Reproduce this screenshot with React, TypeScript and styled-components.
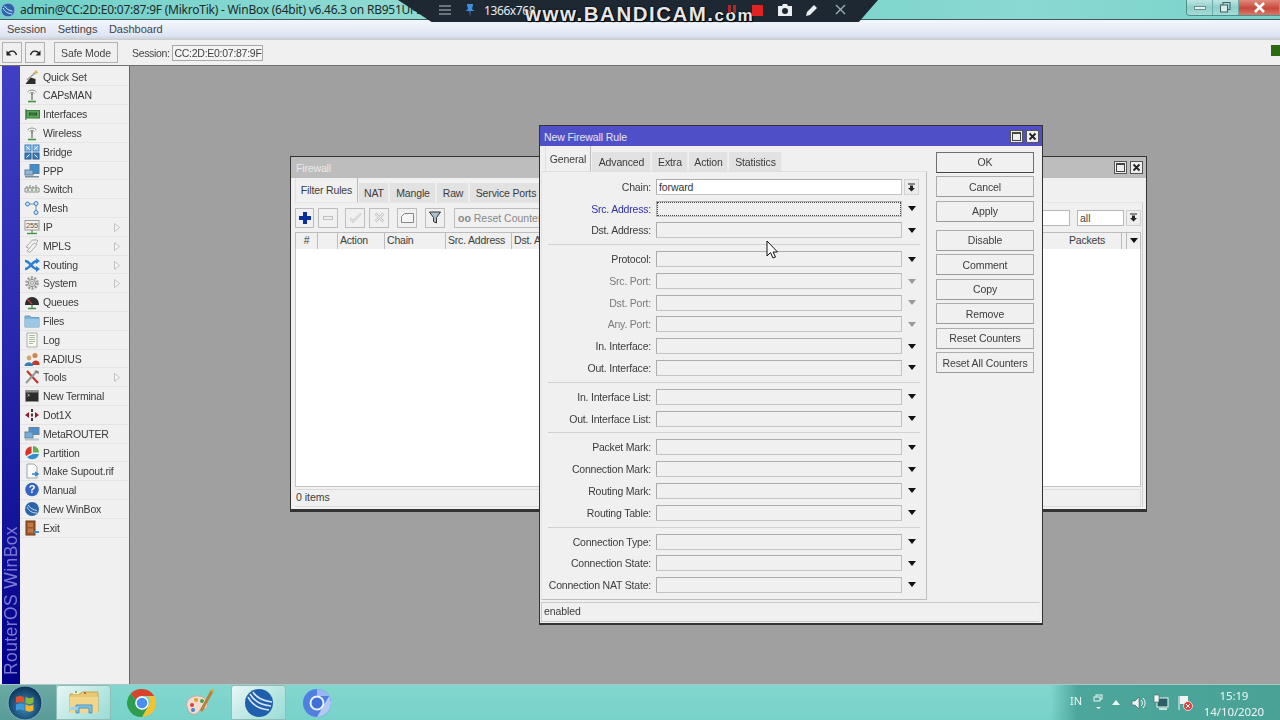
import React from "react";
import styled, { createGlobalStyle } from "styled-components";

const Global = createGlobalStyle`
  html, body { margin: 0; padding: 0; overflow: hidden; background: #a0a0a0; }
  * { box-sizing: border-box; }
  #root { font-family: "Liberation Sans", Arial, sans-serif; font-size: 11px; color: #333; }
`;

const Page = styled.div`
  width: 1280px; height: 720px; position: relative; overflow: hidden;
  display: flex; flex-direction: column; filter: blur(0.3px);
`;

/* ---------- window chrome ---------- */
const TitleBar = styled.div`
  height: 20px; flex: none; display: flex; align-items: center; padding-left: 0;
  background: linear-gradient(100deg, #6fd0c8 0%, #8edad3 30%, #79d3cb 60%, #8ad9d2 80%, #78d2ca 100%);
  border-bottom: 1px solid #3f5a58;
`;
const AppTitle = styled.span`
  font-family: "Noto Sans", sans-serif; font-size: 12px; color: #1c2a2a; margin-left: 4px; white-space: nowrap;
  letter-spacing: -0.02em;
`;
const WinControls = styled.div`
  margin-left: auto; align-self: flex-start; display: flex; height: 16px;
  border: 1px solid #4e8f8b; border-top: 0; border-right: 0; border-radius: 0 0 0 4px; overflow: hidden;
`;
const WinCtl = styled.div<{ $w: number; $close?: boolean }>`
  width: ${p => p.$w}px; display: flex; align-items: center; justify-content: center;
  background: ${p => p.$close ? "linear-gradient(#e08a7c, #c8483a 55%, #d67a6a)" : "linear-gradient(#bfe6e3, #8ecfca 50%, #a6dcd8)"};
  border-right: 1px solid #6aa9a5;
`;
const MenuBar = styled.div`
  height: 20px; flex: none; display: flex; align-items: center; padding-left: 7px; gap: 11.5px;
  background: linear-gradient(#f3f6fc, #dfe6f4 75%, #d3d7e2 90%, #c9c9c9);
  font-size: 11px; color: #444; padding-bottom: 3px;
`;
const ToolBar = styled.div`
  height: 26px; flex: none; display: flex; align-items: center; background: #f0f0f0;
  border-bottom: 1px solid #6f6f6f; padding-left: 2px;
`;
const ToolBtn = styled.div<{ $w: number; $ml?: number }>`
  width: ${p => p.$w}px; height: 21px; margin-left: ${p => p.$ml ?? 0}px; display: flex; align-items: center; justify-content: center;
  border: 1px solid #b0b0b0; background: #f0f0f0; font-size: 10.5px; letter-spacing: -.1px; color: #444;
`;
const SessionLabel = styled.span` margin-left: 14px; font-size: 10.5px; letter-spacing: -.35px; color: #444; `;
const SessionField = styled.div`
  margin-left: 3px; width: 91px; height: 16px; background: #f4f4f4; border: 1px solid #a8a8a8;
  font-size: 10.5px; letter-spacing: -.27px; line-height: 14px; padding-left: 1px; color: #444; white-space: nowrap;
`;
const StatusLed = styled.div` margin-left: auto; width: 9px; height: 11px; background: #2c6b12; margin-top: -5px; `;

/* ---------- bandicam ---------- */
const Bandicam = styled.div`
  position: absolute; left: 398px; top: 0; width: 480px; height: 22px; background: #1d2833;
  clip-path: polygon(0 0, 100% 0, 96% 100%, 7% 100%);
`;
const BandRow = styled.div`
  position: absolute; left: 398px; top: 0; width: 480px; height: 22px; display: flex; align-items: center;
  color: #e8eef2; padding-left: 41px;
`;
const BandRes = styled.span` font-size: 12px; margin-left: 9px; font-family: "Noto Sans", sans-serif; letter-spacing: -0.4px; margin-top:-2px; `;
const BandMark = styled.span`
  position: absolute; left: 127px; top: 3px; font-size: 20.5px; font-weight: 700; letter-spacing: 1.5px;
  color: rgba(255,255,255,.92); text-shadow: 0 0 2px #000, 1px 1px 1px #000; white-space: nowrap; line-height: 22px;
`;
const BandMarkSmall = styled.span` font-size: 17px; `;
const BandIcon = styled.svg<{ $x: number }>` position: absolute; left: ${p => p.$x}px; top: 2px; width: 16px; height: 16px; `;

/* ---------- main ---------- */
const Main = styled.div` flex: 1; display: flex; min-height: 0; position: relative; `;
const Sidebar = styled.aside`
  width: 130px; flex: none; display: flex; background: #f0f0f0; border-right: 1px solid #666; padding-left: 2px;
`;
const Strip = styled.div`
  width: 18px; flex: none; display: flex; justify-content: flex-start; align-items: flex-end; padding-bottom: 9px;
  background: linear-gradient(#3f40c6, #2626ae 45%, #00008a 100%);
`;
const StripText = styled.span`
  writing-mode: vertical-rl; transform: rotate(180deg); font-size: 17.5px; line-height: 18px; color: #7a7ad0;
  white-space: nowrap; letter-spacing: .4px;
`;
const MenuList = styled.nav` flex: 1; padding-top: 1.7px; `;
const MenuItem = styled.div`
  height: 18.81px; display: flex; align-items: center; position: relative; padding-left: 4px;
  border-bottom: 1px solid #e4e4e4; font-size: 10.5px; letter-spacing: -.2px; color: #3a3a3a; white-space: nowrap;
`;
const MenuIconSvg = styled.svg` width: 16px; height: 16px; flex: none; margin-right: 3px; `;
const SubArrow = styled.svg` position: absolute; left: 94px; top: 5px; width: 6px; height: 9px; `;
const Workspace = styled.div` flex: 1; background: #a0a0a0; `;

/* ---------- inner windows ---------- */
const FirewallWin = styled.section`
  position: absolute; left: 290px; top: 90px; width: 857px; height: 356px; background: #f0f0f0;
  border: 1px solid #333; border-bottom: 3px solid #333; display: flex; flex-direction: column;
`;
const FwTitle = styled.div`
  height: 21px; flex: none; background: #bdbdbd; color: #e9e9e9; font-size: 10.5px; letter-spacing: -.15px; display: flex; align-items: center; padding-left: 5px;
`;
const WinBtns = styled.div` margin-left: auto; display: flex; gap: 3px; padding-right: 3px; margin-top: -1px; `;
const WinBtn = styled.div`
  width: 13px; height: 13px; background: #ededed; border: 1px solid #555; display: flex; align-items: center; justify-content: center;
`;
const MaxBox = styled.div` width: 9px; height: 9px; border: 1px solid #444; border-top-width: 2px; `;
const TabRow = styled.div<{ $pl: number; $h: number }>`
  display: flex; align-items: flex-end; gap: 1px; padding-left: ${p => p.$pl}px; height: ${p => p.$h}px; flex: none;
`;
const Tab = styled.div<{ $w: number; $active?: boolean }>`
  width: ${p => p.$w}px; height: ${p => p.$active ? "100%" : "19px"}; display: flex; align-items: center; justify-content: center;
  font-size: 10.5px; letter-spacing: -.15px; color: #3c3c3c; background: ${p => p.$active ? "#f0f0f0" : "#e2e2e2"};
  border-right: 1px solid ${p => p.$active ? "#bbb" : "#ececec"};
  border-left: 1px solid ${p => p.$active ? "#e0e0e0" : "transparent"};
  white-space: nowrap; overflow: hidden;
`;
const FwPanel = styled.div`
  flex: 1; margin: 0 3px 2px 3px; border-top: 1px solid #e6e6e6; border-right: 1px solid #cfcfcf; display: flex; flex-direction: column; padding: 0 1px 0 1px; min-height: 0;
`;
const FwToolbar = styled.div` height: 29px; flex: none; display: flex; align-items: center; `;
const SmallBtn = styled.div<{ $ml?: number; $w?: number }>`
  width: ${p => p.$w ?? 20}px; height: 20px; margin-left: ${p => p.$ml ?? 0}px; flex: none; display: flex; align-items: center; justify-content: center;
  border: 1px solid #bdbdbd; background: #f0f0f0;
`;
const ResetBtn = styled.div`
  width: 150px; height: 20px; margin-left: 9px; flex: none; display: flex; align-items: center; padding-left: 3px;
  border: 1px solid #bdbdbd; background: #f0f0f0; color: #888; font-size: 10.5px; white-space: nowrap; overflow: hidden;
`;
const FwRight = styled.div` margin-left: auto; display: flex; align-items: center; `;
const WhiteInput = styled.div<{ $w: number; $ml?: number }>`
  width: ${p => p.$w}px; height: 16px; margin-left: ${p => p.$ml ?? 0}px; background: #fff; border: 1px solid #b8b8b8; font-size: 10.5px; line-height: 14px; padding-left: 2px; color: #444;
`;
const DropBtn = styled.div<{ $ml?: number }>`
  width: 15px; height: 16px; margin-left: ${p => p.$ml ?? 0}px; flex: none; border: 1px solid #cfcfcf; background: #eee; display: flex; align-items: center; justify-content: center;
`;
const TableHead = styled.div` height: 17px; flex: none; display: flex; background: #f0f0f0; border: 1px solid #bdbdbd; border-bottom: 0; `;
const HeadCell = styled.div<{ $w: number; $center?: boolean; $pl?: number }>`
  width: ${p => p.$w}px; flex: none; font-size: 10.5px; letter-spacing: -.2px; color: #3c3c3c; padding-left: ${p => p.$center ? 0 : p.$pl ?? 2}px; text-align: ${p => p.$center ? "center" : "left"};
  border-right: 1px solid #bdbdbd; line-height: 15px; white-space: nowrap; overflow: hidden;
`;
const HeadFill = styled.div` flex: 1; `;
const HeadArrow = styled.div` width: 13px; flex: none; display: flex; justify-content: center; padding-top: 5px; `;
const TableBody = styled.div` flex: 1; background: #fff; border: 1px solid #c4c4c4; border-top: 0; `;
const FwStatus = styled.div`
  height: 18px; flex: none; margin-top: 2px; font-size: 10.5px; line-height: 14px; padding-left: 1px; color: #3c3c3c; border: 1px solid #dcdcdc; border-left: 0;
`;

const DialogWin = styled.section`
  position: absolute; left: 539px; top: 59px; width: 504px; height: 500px; background: #f0f0f0;
  border: 1px solid #333; border-bottom: 2px solid #333; display: flex; flex-direction: column;
`;
const DlgTitle = styled.div`
  height: 20px; flex: none; background: #4f50c8; color: #e6e6f6; font-size: 10.5px; letter-spacing: -.1px; display: flex; align-items: center; padding: 1px 0 0 4px;
`;
const DlgBody = styled.div` flex: 1; display: flex; min-height: 0; padding-left: 1px; `;
const DlgLeft = styled.div` width: 386px; flex: none; display: flex; flex-direction: column; `;
const FormPanel = styled.div`
  flex: 1; border-top: 1px solid #dedede; border-right: 1px solid #bdbdbd; border-bottom: 1px solid #bdbdbd; border-left: 1px solid #e4e4e4; padding-top: 4.2px;
`;
const Row = styled.div` height: 21.7px; display: flex; align-items: center; `;
const Label = styled.div<{ $tone: "normal" | "muted" | "focus" }>`
  width: 109px; flex: none; text-align: right; font-size: 10.5px; letter-spacing: -.2px; white-space: nowrap;
  color: ${p => p.$tone === "muted" ? "#7a7a7a" : p.$tone === "focus" ? "#2f2fb0" : "#3c3c3c"};
`;
const Field = styled.div<{ $white?: boolean; $focus?: boolean }>`
  width: 246px; height: 16px; margin-left: 5px; flex: none; position: relative;
  background: ${p => p.$white ? "#fff" : "#f0f0f0"}; border: 1px solid #adadad; border-bottom-color: #c4c4c4; border-right-color: #c4c4c4;
  font-size: 10.5px; letter-spacing: -.1px; line-height: 14px; padding-left: 2px; color: #333;
  outline: ${p => p.$focus ? "1px dotted #444" : "none"}; outline-offset: -2px;
`;
const ArrowWrap = styled.div` width: 20px; display: flex; justify-content: center; `;
const Arrow = styled.div<{ $muted?: boolean }>`
  width: 0; height: 0; border-left: 4.5px solid transparent; border-right: 4.5px solid transparent;
  border-top: 5px solid ${p => p.$muted ? "#9a9a9a" : "#111"};
`;
const Sep = styled.div`
  height: 7.3px; display: flex; align-items: center; padding: 0 6px 0 6px;
  &::before { content: ""; flex: 1; height: 1px; background: #d2d2d2; }
`;
const ChainBtn = styled.div` width: 15px; height: 16px; margin-left: 2px; border: 1px solid #d2d2d2; background: #ececec; display: flex; align-items: center; justify-content: center; `;
const DlgButtons = styled.div` flex: 1; display: flex; flex-direction: column; padding: 2px 0 0 9px; `;
const DlgBtn = styled.div<{ $def?: boolean; $mt?: number }>`
  width: 98px; height: 21px; flex: none; margin-top: ${p => p.$mt ?? 3.5}px; display: flex; align-items: center; justify-content: center;
  border: 1px solid ${p => p.$def ? "#707070" : "#adadad"}; border-bottom-color: ${p => p.$def ? "#444" : "#9a9a9a"};
  font-size: 10.5px; letter-spacing: -.1px; color: #3c3c3c; background: #f0f0f0;
`;
const DlgStatus = styled.div`
  height: 20px; flex: none; margin: 2px 2px 1px 1px; border: 1px solid #c9c9c9; border-right-color: #eee; font-size: 10.5px; letter-spacing: -.1px; line-height: 17px; padding-left: 2px; color: #3c3c3c;
`;
const Cursor = styled.svg` position: absolute; left: 766px; top: 174px; width: 12px; height: 20px; `;

/* ---------- taskbar ---------- */
const Taskbar = styled.footer`
  height: 36px; flex: none; display: flex; align-items: stretch;
  background: linear-gradient(#83d6ce, #78d2ca); border-top: 1px solid #a8c8c4;
`;
const StartArea = styled.div` width: 56px; flex: none; display: flex; align-items: center; padding-left: 7px; background: linear-gradient(#6aa9a4, #5a9c98); `;
const TaskBtn = styled.div<{ $on?: boolean; $ml?: number }>`
  width: ${p => p.$on ? 55 : 58}px; flex: none; margin-left: ${p => p.$ml ?? 0}px; display: flex; align-items: center; justify-content: center;
  background: ${p => p.$on ? "linear-gradient(135deg, #e8f6f5, #b6e6e1 60%, #9bdcd6)" : "transparent"};
  border: ${p => p.$on ? "1px solid #8fbdb9" : "0"}; border-radius: 3px 3px 0 0;
`;
const Tray = styled.div`
  margin-left: auto; width: 230px; display: flex; align-items: center; position: relative; color: #eef6f5;
  background: linear-gradient(90deg, rgba(70,160,150,0), #4da69b 12%, #4aa297 100%);
  font-family: "Noto Sans", sans-serif; font-size: 12px;
`;
const TrayLang = styled.span` margin-left: 20px; font-size: 11px; margin-top: -4px; width: 20px; `;
const TrayIcon = styled.svg<{ $ml: number }>` margin-left: ${p => p.$ml}px; flex: none; `;
const Clock = styled.div` margin-left: auto; margin-right: 16px; text-align: center; font-size: 11.5px; line-height: 16px; letter-spacing: -.1px; margin-top: 3px; `;

/* ---------- icons ---------- */
const Antenna = () => (<>
  <path d="M3.5 5a6 6 0 0 1 9 0M5.5 6.5a3.2 3.2 0 0 1 5 0" stroke="#8a9a8a" fill="none" />
  <path d="M8 7v6" stroke="#666" strokeWidth="1.2" />
  <circle cx="8" cy="7" r="1" fill="#777" />
  <path d="M4 14.5h8" stroke="#3c9a3c" strokeWidth="1.6" />
</>);
const Monitors = () => (<>
  <rect x="5" y="1.5" width="10" height="7" fill="#4a8fd0" stroke="#70808e" />
  <rect x="1" y="6" width="8" height="6" fill="#6fb0e0" stroke="#70808e" />
  <rect x="1" y="12.5" width="14" height="2" fill="#b8c4cc" />
</>);
const sidebarIcons: Record<string, React.ReactNode> = {
  "Quick Set": <>
    <path d="M1.5 15l5-6.500 5 1.500v5z" fill="#2d2d2d" />
    <path d="M3 11l8-7" stroke="#9a9a9a" strokeWidth="1.6" />
    <path d="M12 .5l.8 2 2 .8-2 .8-.8 2-.8-2-2-.8 2-.8z" fill="#d9b43a" />
  </>,
  "CAPsMAN": <Antenna />,
  "Interfaces": <>
    <rect x="1" y="3" width="1.5" height="11" fill="#8a8a8a" />
    <rect x="2.5" y="4.5" width="13" height="7.5" fill="#5aa85a" stroke="#3c7c3c" />
    <path d="M5 6.500h8v3H5z" fill="#1f4f1f" />
    <path d="M7 6.500v3M9 6.500v3M11 6.500v3" stroke="#7bc47b" strokeWidth=".6" />
  </>,
  "Wireless": <Antenna />,
  "Bridge": <>
    <rect x="1" y="1" width="6" height="6" fill="#8fc3ea" stroke="#3a7ec0" />
    <rect x="9" y="1" width="6" height="6" fill="#8fc3ea" stroke="#3a7ec0" />
    <rect x="1" y="9" width="6" height="6" fill="#3a7ec0" stroke="#24598f" />
    <rect x="9" y="9" width="6" height="6" fill="#3a7ec0" stroke="#24598f" />
    <path d="M2.500 2.500l3 3M13.500 2.500l-3 3M5.500 10.500l-3 3M10.500 10.500l3 3" stroke="#fff" />
  </>,
  "PPP": <>
    <rect x="6" y="1.5" width="9" height="9" fill="#3f8ed0" stroke="#5b7d99" />
    <rect x="1" y="7" width="8" height="5" fill="#8fb8d8" stroke="#5b7d99" />
    <path d="M1 13h14v1.500H1z" fill="#7a8ea0" />
  </>,
  "Switch": <>
    <path d="M1 7h14v4H1z" fill="#e8e8e8" stroke="#8a8a8a" />
    <path d="M3 5v2M6 4v3M9 5v2M12 4v3" stroke="#7a7a7a" />
    <path d="M3 9h2M7 9h2M11 9h2" stroke="#3c8c3c" />
  </>,
  "Mesh": <>
    <circle cx="3.5" cy="4" r="2" fill="#cfe4f5" stroke="#3a7ec0" />
    <circle cx="12" cy="3.5" r="2" fill="#cfe4f5" stroke="#3a7ec0" />
    <circle cx="12" cy="12.5" r="2" fill="#cfe4f5" stroke="#3a7ec0" />
    <path d="M5.500 4H10M12 5.500v5" stroke="#6a8aa5" />
  </>,
  "IP": <>
    <rect x="1" y="1.5" width="14" height="9.5" fill="#f0f0f0" stroke="#999" />
    <text x="8" y="9" fontSize="7.5" textAnchor="middle" fill="#555" fontFamily="Liberation Sans">255</text>
    <path d="M8 11v3" stroke="#666" /><path d="M3 14.500h10" stroke="#3c9a3c" strokeWidth="1.4" />
  </>,
  "MPLS": <>
    <path d="M2 9l6.500-7H13l1 1-7 8z" fill="#f2f2f2" stroke="#aaa" />
    <path d="M3 13l7-8 3 1.500-7 8z" fill="#f6f6f6" stroke="#aaa" />
  </>,
  "Routing": <>
    <path d="M1 4c5 0 7 8 12 8M1 12c5 0 7-8 12-8" stroke="#2f7fd0" strokeWidth="2.6" fill="none" />
    <path d="M12 1l4 3-4 3zM12 9l4 3-4 3z" fill="#2f7fd0" />
  </>,
  "System": <>
    <circle cx="8" cy="8" r="5.5" stroke="#999" strokeWidth="2.6" strokeDasharray="2 1.45" fill="none" />
    <circle cx="8" cy="8" r="3.6" fill="#e4e4e4" stroke="#888" />
    <circle cx="8" cy="8" r="1.5" fill="#f4f4f4" stroke="#999" />
  </>,
  "Queues": <>
    <path d="M1 10a7 7 0 0 1 14 0v1H1z" fill="#2e2e2e" />
    <path d="M3 5l5 5" stroke="#d03a3a" strokeWidth="1.2" />
    <path d="M8 11v3" stroke="#555" /><path d="M4 14.500h8" stroke="#3c9a3c" strokeWidth="1.5" />
  </>,
  "Files": <>
    <path d="M1 3h5l1 1.500h8V14H1z" fill="#7fb2d6" stroke="#6a9cc0" />
    <path d="M1 6h14v8H1z" fill="#9cc6e4" />
  </>,
  "Log": <>
    <path d="M3 1h10v14H3z" fill="#fbfbf2" stroke="#aaa" />
    <path d="M5 3.500h6M5 5.500h6M5 7.500h6M5 9.500h6M5 11.500h4" stroke="#93a893" strokeWidth=".8" />
  </>,
  "RADIUS": <>
    <circle cx="5" cy="7" r="2.4" fill="#d9a36a" /><circle cx="11" cy="4.5" r="2.6" fill="#c9884f" />
    <path d="M8 13c0-4 6-5 7.500-1v2H8z" fill="#c23a2c" />
    <path d="M.5 15c0-5 8.500-5 8.500 0z" fill="#2f7fc0" />
  </>,
  "Tools": <>
    <path d="M3 2l11 12" stroke="#c0392b" strokeWidth="2.2" />
    <path d="M13 2L2 14" stroke="#9a9a9a" strokeWidth="2.2" />
    <path d="M10.500 1.500l4 .5.5 3-2-1-1.500-1z" fill="#777" />
  </>,
  "New Terminal": <>
    <rect x="1" y="2" width="14" height="12" rx="1" fill="#8e8e8e" />
    <rect x="2" y="4.5" width="12" height="8.5" fill="#2c2c2c" />
    <path d="M3.500 6l2 1.200-2 1.200" stroke="#ddd" strokeWidth=".8" fill="none" />
  </>,
  "Dot1X": <>
    <path d="M1 8l4-3v6zM15 8l-4-3v6z" fill="#8e1f2a" />
    <path d="M7 2h2v3H7zM7 6.500h2v3H7zM7 11h2v3H7z" fill="#3a3a3a" />
  </>,
  "MetaROUTER": <Monitors />,
  "Partition": <>
    <path d="M7.500 1.500A6.500 6.500 0 0 0 2 11l5.500-3z" fill="#d8352a" />
    <path d="M9 1a6.500 6.500 0 0 1 6 6.500H9z" fill="#5bb04a" />
    <path d="M15 9A7 7 0 0 1 3 12l6-3z" fill="#2f8fd0" />
  </>,
  "Make Supout.rif": <>
    <path d="M3 1h7l3 3v11H3z" fill="#fafafa" stroke="#9aa5ad" />
    <path d="M8 11h5M11 9l3 2-3 2" stroke="#2f7fd0" strokeWidth="1.5" fill="none" />
  </>,
  "Manual": <>
    <circle cx="8" cy="7.5" r="6.8" fill="#3464c4" />
    <text x="8" y="11.3" fontSize="11" fontWeight="700" textAnchor="middle" fill="#fff" fontFamily="Liberation Sans">?</text>
  </>,
  "New WinBox": <>
    <circle cx="8" cy="8" r="7" fill="#2b66ad" />
    <path d="M3 6c2 4 5 6 10 6M4 4c2 3 5 5 9 5.500" stroke="#dbe9f6" fill="none" strokeWidth=".9" />
  </>,
  "Exit": <>
    <rect x="2" y="1" width="9" height="14" fill="#a4582a" stroke="#6f3a18" />
    <rect x="4" y="3" width="5" height="4" fill="#c07a48" /><rect x="4" y="8.5" width="5" height="4" fill="#c07a48" />
    <path d="M10 12h5" stroke="#3a8fd0" strokeWidth="2" />
  </>,
};

const menu: { label: string; sub?: boolean }[] = [
  { label: "Quick Set" }, { label: "CAPsMAN" }, { label: "Interfaces" }, { label: "Wireless" }, { label: "Bridge" },
  { label: "PPP" }, { label: "Switch" }, { label: "Mesh" }, { label: "IP", sub: true }, { label: "MPLS", sub: true },
  { label: "Routing", sub: true }, { label: "System", sub: true }, { label: "Queues" }, { label: "Files" }, { label: "Log" },
  { label: "RADIUS" }, { label: "Tools", sub: true }, { label: "New Terminal" }, { label: "Dot1X" }, { label: "MetaROUTER" },
  { label: "Partition" }, { label: "Make Supout.rif" }, { label: "Manual" }, { label: "New WinBox" }, { label: "Exit" },
];

type FormRow = { label: string; tone?: "muted" | "focus"; white?: string; focus?: boolean };
const groups: FormRow[][] = [
  [{ label: "Chain:", white: "forward" }, { label: "Src. Address:", tone: "focus", focus: true }, { label: "Dst. Address:" }],
  [{ label: "Protocol:" }, { label: "Src. Port:", tone: "muted" }, { label: "Dst. Port:", tone: "muted" }, { label: "Any. Port:", tone: "muted" }, { label: "In. Interface:" }, { label: "Out. Interface:" }],
  [{ label: "In. Interface List:" }, { label: "Out. Interface List:" }],
  [{ label: "Packet Mark:" }, { label: "Connection Mark:" }, { label: "Routing Mark:" }, { label: "Routing Table:" }],
  [{ label: "Connection Type:" }, { label: "Connection State:" }, { label: "Connection NAT State:" }],
];

const DropGlyph = () => (
  <svg width="9" height="9" viewBox="0 0 9 9"><path d="M1 1h7" stroke="#222" /><path d="M3 2.500h3V5h2L4.500 8.500 1 5h2z" fill="#222" /></svg>
);
const CloseGlyph = () => (
  <svg width="9" height="9" viewBox="0 0 9 9"><path d="M1.500 1.500l6 6M7.500 1.500l-6 6" stroke="#222" strokeWidth="1.8" /></svg>
);

const Orb = () => (
  <svg width="36" height="36" viewBox="0 0 36 36">
    <defs><radialGradient id="orb" cx="50%" cy="60%" r="60%"><stop offset="0" stopColor="#3f8fc0" /><stop offset="1" stopColor="#0a2f52" /></radialGradient></defs>
    <circle cx="18" cy="18" r="17" fill="url(#orb)" stroke="#7fb3c0" />
    <path d="M9 12c3-1.500 5-1.500 8 0v6c-3-1.500-5-1.500-8 0z" fill="#e0512c" />
    <path d="M18.500 12c3 1.500 5 1.500 8 0v6c-3 1.500-5 1.500-8 0z" fill="#8ab93c" />
    <path d="M9 19.500c3-1.500 5-1.500 8 0v6c-3-1.500-5-1.500-8 0z" fill="#3f9be0" />
    <path d="M18.500 19.500c3 1.500 5 1.500 8 0v6c-3 1.500-5 1.500-8 0z" fill="#f0b429" />
  </svg>
);
const FolderIcon = () => (
  <svg width="32" height="30" viewBox="0 0 32 30">
    <path d="M2 6h10l2-2h16v20H2z" fill="#e8c873" stroke="#c8a650" />
    <path d="M5 3h6v3H5z" fill="#f4f0d8" /><circle cx="8" cy="4" r="1" fill="#4aa04a" /><circle cx="17" cy="5" r="1" fill="#d04040" />
    <path d="M2 9h28v16H2z" fill="#f1d68c" />
    <path d="M8 25v-8h16v8h-3v-5H11v5z" fill="#7cc0e4" stroke="#4f97c0" />
    <path d="M1 19h9v3H1z" fill="#9fd4ee" />
  </svg>
);
const ChromeIcon = () => (
  <svg width="30" height="30" viewBox="0 0 30 30">
    <path d="M15 1a14 14 0 0 1 12.100 7H15a7 7 0 0 0-6.300 4L3.800 5.600A14 14 0 0 1 15 1z" fill="#d8432e" />
    <path d="M27.100 8A14 14 0 0 1 15 29l6-10.500A7 7 0 0 0 21 8z" fill="#f3c22e" />
    <path d="M3.800 5.600A14 14 0 0 0 15 29l6-10.500a7 7 0 0 1-12.300-6.500z" fill="#2e9d4e" />
    <circle cx="15" cy="15" r="6" fill="#4a8ff0" stroke="#fff" strokeWidth="1.300" />
  </svg>
);
const PaletteIcon = () => (
  <svg width="32" height="32" viewBox="0 0 32 32">
    <path d="M3 20C1 13 8 8 15 9c7 1 10 6 8 11-1.500 3-5 1-7 3-2 3-4 5-8 4-3-1-4-4-5-7z" fill="#f0ddd0" stroke="#c0a898" />
    <circle cx="8" cy="18" r="2" fill="#d84040" /><circle cx="12" cy="13" r="2" fill="#e0a030" /><circle cx="18" cy="14" r="2" fill="#4aa04a" /><circle cx="9" cy="23" r="2" fill="#4a80d0" />
    <path d="M17 24L28 4" stroke="#b88038" strokeWidth="3" /><path d="M27 5l2-4 1 5z" fill="#e0a040" />
  </svg>
);
const WinboxIcon = () => (
  <svg width="30" height="30" viewBox="0 0 30 30">
    <circle cx="15" cy="15" r="14" fill="#1f5fae" />
    <path d="M4 9c4 8 11 12 21 13M6 6c4 7 10 11 21 12M9 4c3 5 9 9 19 10" stroke="#d8e6f4" fill="none" strokeWidth="1.600" />
  </svg>
);
const ChromiumIcon = () => (
  <svg width="30" height="30" viewBox="0 0 30 30">
    <circle cx="15" cy="15" r="14" fill="#4f7fe0" />
    <path d="M15 1a14 14 0 0 1 12.100 7H15z" fill="#9ab6f4" /><path d="M27.100 8A14 14 0 0 1 15 29l6-10.500z" fill="#b4c8f6" />
    <circle cx="15" cy="15" r="6.500" fill="#3f70d8" stroke="#eef3fd" strokeWidth="2" />
  </svg>
);

export default function App() {
  return (
    <Page>
      <Global />
      <TitleBar>
        <svg width="16" height="16" viewBox="0 0 16 16">
          <circle cx="8" cy="8" r="7" fill="#2b66ad" stroke="#9fc0dc" />
          <path d="M3 6c2 4 4 5 9 6M4.500 4c2 3 4 4.500 8 5.200" stroke="#dbe9f6" fill="none" />
        </svg>
        <AppTitle>admin@CC:2D:E0:07:87:9F (MikroTik) - WinBox (64bit) v6.46.3 on RB951Ui-2HnD</AppTitle>
        <WinControls>
          <WinCtl $w={26}><svg width="12" height="6"><rect x=".5" y="1.500" width="11" height="3" fill="#e6f2f1" stroke="#6e8f8c" /></svg></WinCtl>
          <WinCtl $w={26}><svg width="11" height="11"><rect x="3" y=".5" width="7" height="7" fill="none" stroke="#40605e" /><rect x=".5" y="3" width="7" height="7" fill="#d8ecea" stroke="#40605e" /></svg></WinCtl>
          <WinCtl $w={41} $close><svg width="13" height="11"><path d="M2 1l9 9M11 1l-9 9" stroke="#fff" strokeWidth="2.600" /></svg></WinCtl>
        </WinControls>
      </TitleBar>
      <MenuBar><span>Session</span><span>Settings</span><span>Dashboard</span></MenuBar>
      <ToolBar>
        <ToolBtn $w={20}><svg width="12" height="10" viewBox="0 0 12 10"><path d="M1.500 6C4 2 9 2 10.500 7" stroke="#222" strokeWidth="1.400" fill="none" /><path d="M.5 2.500v5h5z" fill="#222" /></svg></ToolBtn>
        <ToolBtn $w={20} $ml={3}><svg width="12" height="10" viewBox="0 0 12 10"><path d="M10.500 6C8 2 3 2 1.500 7" stroke="#222" strokeWidth="1.400" fill="none" /><path d="M11.500 2.500v5h-5z" fill="#222" /></svg></ToolBtn>
        <ToolBtn $w={64} $ml={9}>Safe Mode</ToolBtn>
        <SessionLabel>Session:</SessionLabel>
        <SessionField>CC:2D:E0:07:87:9F</SessionField>
        <StatusLed />
      </ToolBar>

      <Main>
        <Sidebar>
          <Strip><StripText>RouterOS WinBox</StripText></Strip>
          <MenuList>
            {menu.map(m => (
              <MenuItem key={m.label}>
                <MenuIconSvg viewBox="0 0 16 16">{sidebarIcons[m.label]}</MenuIconSvg>
                {m.label}
                {m.sub && <SubArrow viewBox="0 0 6 9"><path d="M.5.500l5 4-5 4z" fill="#f5f5f5" stroke="#b4b4b4" strokeWidth=".8" /></SubArrow>}
              </MenuItem>
            ))}
          </MenuList>
        </Sidebar>
        <Workspace />

        <FirewallWin>
          <FwTitle>
            Firewall
            <WinBtns><WinBtn><MaxBox /></WinBtn><WinBtn><CloseGlyph /></WinBtn></WinBtns>
          </FwTitle>
          <TabRow $pl={4} $h={24}>
            <Tab $w={63} $active>Filter Rules</Tab>
            <Tab $w={30}>NAT</Tab>
            <Tab $w={46}>Mangle</Tab>
            <Tab $w={32}>Raw</Tab>
            <Tab $w={72}>Service Ports</Tab>
          </TabRow>
          <FwPanel>
            <FwToolbar>
              <SmallBtn $w={19}>
                <svg width="12" height="12" viewBox="0 0 12 12"><path d="M4 0h4v4h4v4H8v4H4V8H0V4h4z" fill="#0b2f9a" /></svg>
              </SmallBtn>
              <SmallBtn $ml={4}><svg width="10" height="4"><rect x=".5" y=".5" width="9" height="3" fill="#eee" stroke="#c0c0c0" /></svg></SmallBtn>
              <SmallBtn $ml={7}><svg width="13" height="11" viewBox="0 0 13 11"><path d="M1 6l3 3.500L12 1.500" stroke="#c8c8c8" strokeWidth="2.200" fill="none" /><path d="M1 6l3 3.500L12 1.500" stroke="#f4f4f4" strokeWidth=".8" fill="none" /></svg></SmallBtn>
              <SmallBtn $ml={4}><svg width="11" height="11" viewBox="0 0 11 11"><path d="M1.500 1.500l8 8M9.500 1.500l-8 8" stroke="#c8c8c8" strokeWidth="2.600" /><path d="M1.500 1.500l8 8M9.500 1.500l-8 8" stroke="#f4f4f4" strokeWidth="1" /></svg></SmallBtn>
              <SmallBtn $ml={8}><svg width="13" height="10" viewBox="0 0 13 10"><path d="M3.500.5h9v9H.5V3.500z" fill="#f5f5f5" stroke="#888" /></svg></SmallBtn>
              <SmallBtn $ml={8}><svg width="12" height="13" viewBox="0 0 12 13"><path d="M.5 1h11L7.500 6.500V12l-3-1.500v-4z" fill="#a9c3d2" stroke="#333" /></svg></SmallBtn>
              <ResetBtn><b>oo</b>&nbsp;Reset Counters</ResetBtn>
              <FwRight>
                <WhiteInput $w={61} />
                <WhiteInput $w={47} $ml={7}>all</WhiteInput>
                <DropBtn $ml={2}><DropGlyph /></DropBtn>
              </FwRight>
            </FwToolbar>
            <TableHead>
              <HeadCell $w={22} $center>#</HeadCell>
              <HeadCell $w={20} />
              <HeadCell $w={47}>Action</HeadCell>
              <HeadCell $w={61}>Chain</HeadCell>
              <HeadCell $w={66}>Src. Address</HeadCell>
              <HeadCell $w={70}>Dst. Address</HeadCell>
              <HeadFill />
              <HeadCell $w={57} $pl={4}>Packets</HeadCell>
              <HeadCell $w={5} />
              <HeadArrow><Arrow /></HeadArrow>
            </TableHead>
            <TableBody />
            <FwStatus>0 items</FwStatus>
          </FwPanel>
        </FirewallWin>

        <DialogWin>
          <DlgTitle>
            New Firewall Rule
            <WinBtns><WinBtn><MaxBox /></WinBtn><WinBtn><CloseGlyph /></WinBtn></WinBtns>
          </DlgTitle>
          <DlgBody>
            <DlgLeft>
              <TabRow $pl={4} $h={25}>
                <Tab $w={46} $active>General</Tab>
                <Tab $w={59}>Advanced</Tab>
                <Tab $w={36}>Extra</Tab>
                <Tab $w={39}>Action</Tab>
                <Tab $w={53}>Statistics</Tab>
              </TabRow>
              <FormPanel>
                {groups.map((g, i) => (
                  <React.Fragment key={i}>
                    {i > 0 && <Sep />}
                    {g.map(r => (
                      <Row key={r.label}>
                        <Label $tone={r.tone ?? "normal"}>{r.label}</Label>
                        <Field $white={!!r.white} $focus={r.focus}>{r.white}</Field>
                        {r.white
                          ? <ChainBtn><DropGlyph /></ChainBtn>
                          : <ArrowWrap><Arrow $muted={r.tone === "muted"} /></ArrowWrap>}
                      </Row>
                    ))}
                  </React.Fragment>
                ))}
              </FormPanel>
            </DlgLeft>
            <DlgButtons>
              <DlgBtn $def>OK</DlgBtn>
              <DlgBtn>Cancel</DlgBtn>
              <DlgBtn>Apply</DlgBtn>
              <DlgBtn $mt={8}>Disable</DlgBtn>
              <DlgBtn>Comment</DlgBtn>
              <DlgBtn>Copy</DlgBtn>
              <DlgBtn>Remove</DlgBtn>
              <DlgBtn>Reset Counters</DlgBtn>
              <DlgBtn>Reset All Counters</DlgBtn>
            </DlgButtons>
          </DlgBody>
          <DlgStatus>enabled</DlgStatus>
        </DialogWin>

        <Cursor viewBox="0 0 12 20"><path d="M1 1v15l3.500-3.500L7 18l2.500-1-2.500-5h4.500z" fill="#fff" stroke="#111" /></Cursor>
      </Main>

      <Taskbar>
        <StartArea><Orb /></StartArea>
        <TaskBtn $on><FolderIcon /></TaskBtn>
        <TaskBtn $ml={2}><ChromeIcon /></TaskBtn>
        <TaskBtn><PaletteIcon /></TaskBtn>
        <TaskBtn $on $ml={2}><WinboxIcon /></TaskBtn>
        <TaskBtn $ml={2}><ChromiumIcon /></TaskBtn>
        <Tray>
          <TrayLang>IN</TrayLang>
          <TrayIcon $ml={3} width="10" height="18" viewBox="0 0 10 18"><rect x="3" y="1" width="6" height="4" fill="none" stroke="#eef6f5" /><rect x="1" y="3" width="6" height="4" fill="#4da69b" stroke="#eef6f5" /><path d="M3 13h5l-2.500 2z" fill="#fff" /></TrayIcon>
          <TrayIcon $ml={8} width="10" height="8" viewBox="0 0 10 8"><path d="M5 1l4 5H1z" fill="#eef6f5" /></TrayIcon>
          <TrayIcon $ml={10} width="16" height="14" viewBox="0 0 16 14"><path d="M1 5h3l4-4v12L4 9H1z" fill="#eef6f5" stroke="#40605e" strokeWidth=".6" /><path d="M10 4a4 4 0 0 1 0 6M12 2a7 7 0 0 1 0 10" stroke="#eef6f5" fill="none" /></TrayIcon>
          <TrayIcon $ml={6} width="16" height="18" viewBox="0 0 16 18"><rect x="4" y="4" width="11" height="9" fill="#2b5f66" stroke="#eef6f5" /><rect x="1" y="1" width="5" height="7" fill="#eef6f5" stroke="#40605e" strokeWidth=".6" /><path d="M6 15h8" stroke="#eef6f5" strokeWidth="1.500" /></TrayIcon>
          <TrayIcon $ml={8} width="16" height="18" viewBox="0 0 16 18"><path d="M2 2v14" stroke="#eef6f5" /><path d="M3 2h8v8H3z" fill="#eef6f5" /><circle cx="11" cy="12" r="4.500" fill="#d84040" stroke="#f0d0d0" /><path d="M9 10l4 4M13 10l-4 4" stroke="#fff" /></TrayIcon>
          <Clock>15:19<br />14/10/2020</Clock>
        </Tray>
      </Taskbar>

      <Bandicam />
      <BandRow>
        <svg width="12" height="12" viewBox="0 0 12 12" style={{ marginTop: -2 }}><path d="M0 2h12M0 6h12M0 10h12" stroke="#b8c2c8" strokeWidth="1.200" /></svg>
        <svg width="10" height="14" viewBox="0 0 10 14" style={{ marginLeft: 14, marginTop: -2 }}><path d="M2 1h6v1L7 6l2.500 2h-4L5 14l-.6-6H.5L3 6 2 2z" fill="#3f8fe0" /></svg>
        <BandRes>1366x768</BandRes>
        <BandMark>www.BANDICAM.<BandMarkSmall>com</BandMarkSmall></BandMark>
        <BandIcon $x={328} viewBox="0 0 16 16"><path d="M2 3h3v8H2zM7 3h3v8H7z" fill="#a82a2a" /></BandIcon>
        <BandIcon $x={353} viewBox="0 0 16 16"><rect x="1" y="3" width="11" height="11" fill="#e02222" /></BandIcon>
        <BandIcon $x={379} viewBox="0 0 16 16"><path d="M1 4h4l1-2h4l1 2h4v10H1z" fill="#e8eef2" /><circle cx="8" cy="9" r="3" fill="#1d2833" /></BandIcon>
        <BandIcon $x={406} viewBox="0 0 16 16"><path d="M2 14l1-4 7-7 3 3-7 7z" fill="#e8eef2" /></BandIcon>
        <BandIcon $x={435} viewBox="0 0 16 16"><path d="M3 3l9 9M12 3l-9 9" stroke="#9fb0ba" strokeWidth="1.300" /></BandIcon>
      </BandRow>
    </Page>
  );
}
